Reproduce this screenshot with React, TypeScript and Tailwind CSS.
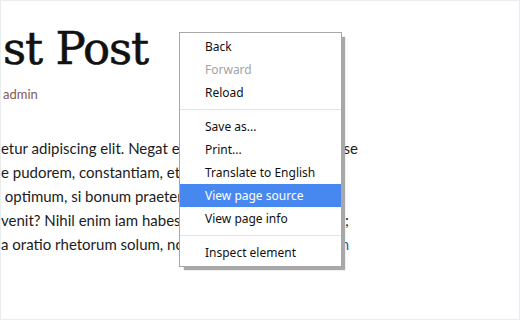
const items: (string | null)[] = [
  'Back',
  'Forward',
  'Reload',
  null,
  'Save as...',
  'Print...',
  'Translate to English',
  'View page source',
  'View page info',
  null,
  'Inspect element',
];

const lines: { left: string; right: string; width: string; link?: boolean }[] = [
  { left: 'etur adipiscing elit. Negat esse eam, inquit, propter', right: 'se', width: 'w-[357px]' },
  { left: 'e pudorem, constantiam, et quod quidem', right: '', width: 'w-[357px]' },
  { left: '\u00a0optimum, si bonum praeterea nullum sit', right: '', width: 'w-[357px]' },
  { left: 'venit? Nihil enim iam habes, quod ad corpus referas', right: ';', width: 'w-[348px]' },
  { left: 'a oratio rhetorum solum, non etiam philosophorum sit', right: 'n', width: 'w-[348px]', link: true },
];

function ContextMenu() {
  return (
    <div className="absolute left-[178px] top-[31px] w-[163px] border border-[#a7a7a7] bg-white py-[2px] shadow-[4px_4px_1px_-1px_#a8a8a8] font-['Noto_Sans',sans-serif] text-[12px]">
      {items.map((label, i) =>
        label === null ? (
          <div key={i} className="my-[5px] h-px bg-[#e3e3ec]" />
        ) : (
          <div
            key={i}
            className={
              label === 'View page source'
                ? 'flex h-[23px] items-center bg-[#4687f0] pl-[25px] text-white'
                : label === 'Forward'
                  ? 'flex h-[23px] items-center pl-[25px] text-[#a3a3a3]'
                  : 'flex h-[23px] items-center pl-[25px] text-[#111]'
            }
          >
            {label}
          </div>
        ),
      )}
    </div>
  );
}

export default function App() {
  return (
    <div className="relative h-[320px] w-[520px] overflow-hidden border border-[#e9ecec] bg-white">
      <h1 className="ml-[2px] mt-[25px] whitespace-nowrap font-['DejaVu_Serif',serif] text-[45px] leading-[45px] tracking-[-1px] text-[#111] [-webkit-text-stroke:0.6px_#111]">
        st Post
      </h1>
      <div className="ml-[2px] mt-[14px] font-['Lato',sans-serif] text-[13px] text-[#845a55]">admin</div>

      <div className="mt-[31px] font-['Lato',sans-serif] text-[15px] leading-[24px] text-[#1c1c1c]">
        {lines.map((line, i) => (
          <div key={i} className={`flex ${line.width} justify-between whitespace-nowrap`}>
            <span className="min-w-0 flex-1 overflow-hidden">{line.left}</span>
            <span className={line.link ? 'shrink-0 text-[#2a5bb5]' : 'shrink-0'}>{line.right}</span>
          </div>
        ))}
      </div>

      <ContextMenu />
    </div>
  );
}
